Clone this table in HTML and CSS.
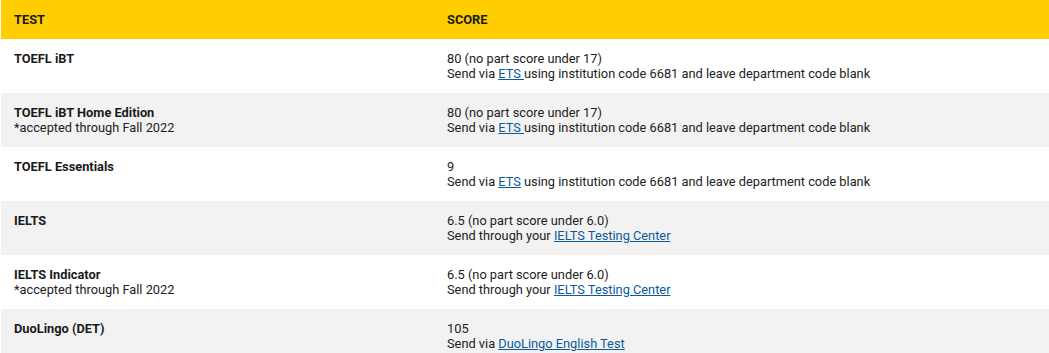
FILE: index.html
```html
<!DOCTYPE html>
<html>
<head>
<meta charset="utf-8">
<link rel="stylesheet" href="styles.css">
</head>
<body>
<div class="wrap">
<table class="scores">
  <thead>
    <tr><th class="c1">TEST</th><th>SCORE</th></tr>
  </thead>
  <tbody>
    <tr><td class="c1"><strong>TOEFL iBT</strong></td><td>80 (no part score under 17)<br>Send via <a href="#">ETS </a>using institution code 6681 and leave department code blank</td></tr>
    <tr><td class="c1"><strong>TOEFL iBT Home Edition</strong><br>*accepted through Fall 2022</td><td>80 (no part score under 17)<br>Send via <a href="#">ETS </a>using institution code 6681 and leave department code blank</td></tr>
    <tr><td class="c1"><strong>TOEFL Essentials</strong></td><td>9<br>Send via <a href="#">ETS</a> using institution code 6681 and leave department code blank</td></tr>
    <tr><td class="c1"><strong>IELTS</strong></td><td>6.5 (no part score under 6.0)<br>Send through your <a href="#">IELTS Testing Center</a></td></tr>
    <tr><td class="c1"><strong>IELTS Indicator</strong><br>*accepted through Fall 2022</td><td>6.5 (no part score under 6.0)<br>Send through your <a href="#">IELTS Testing Center</a></td></tr>
    <tr><td class="c1"><strong>DuoLingo (DET)</strong></td><td>105<br>Send via <a href="#">DuoLingo English Test</a></td></tr>
  </tbody>
</table>
</div>
</body>
</html>
```
FILE: styles.css
```css
html, body {
  margin: 0;
  padding: 0;
  background: #fff;
}
.wrap {
  padding-left: 1px;
}
.scores {
  width: 1048px;
  border-collapse: collapse;
  font-family: Roboto, "Liberation Sans", sans-serif;
  font-size: 12.8px;
  line-height: 15px;
  color: #222;
}
.scores th, .scores td {
  text-align: left;
  vertical-align: top;
  padding: 12px 13px;
}
.scores th {
  background: #ffcd00;
  font-weight: 700;
  color: #1a1a1a;
}
.scores .c1 {
  width: 407px;
}
.scores tbody tr:nth-child(even) td {
  background: #f2f2f2;
}
.scores strong {
  font-weight: 700;
  color: #1a1a1a;
}
.scores a {
  color: #0b5a9c;
  text-decoration: underline;
}
```
